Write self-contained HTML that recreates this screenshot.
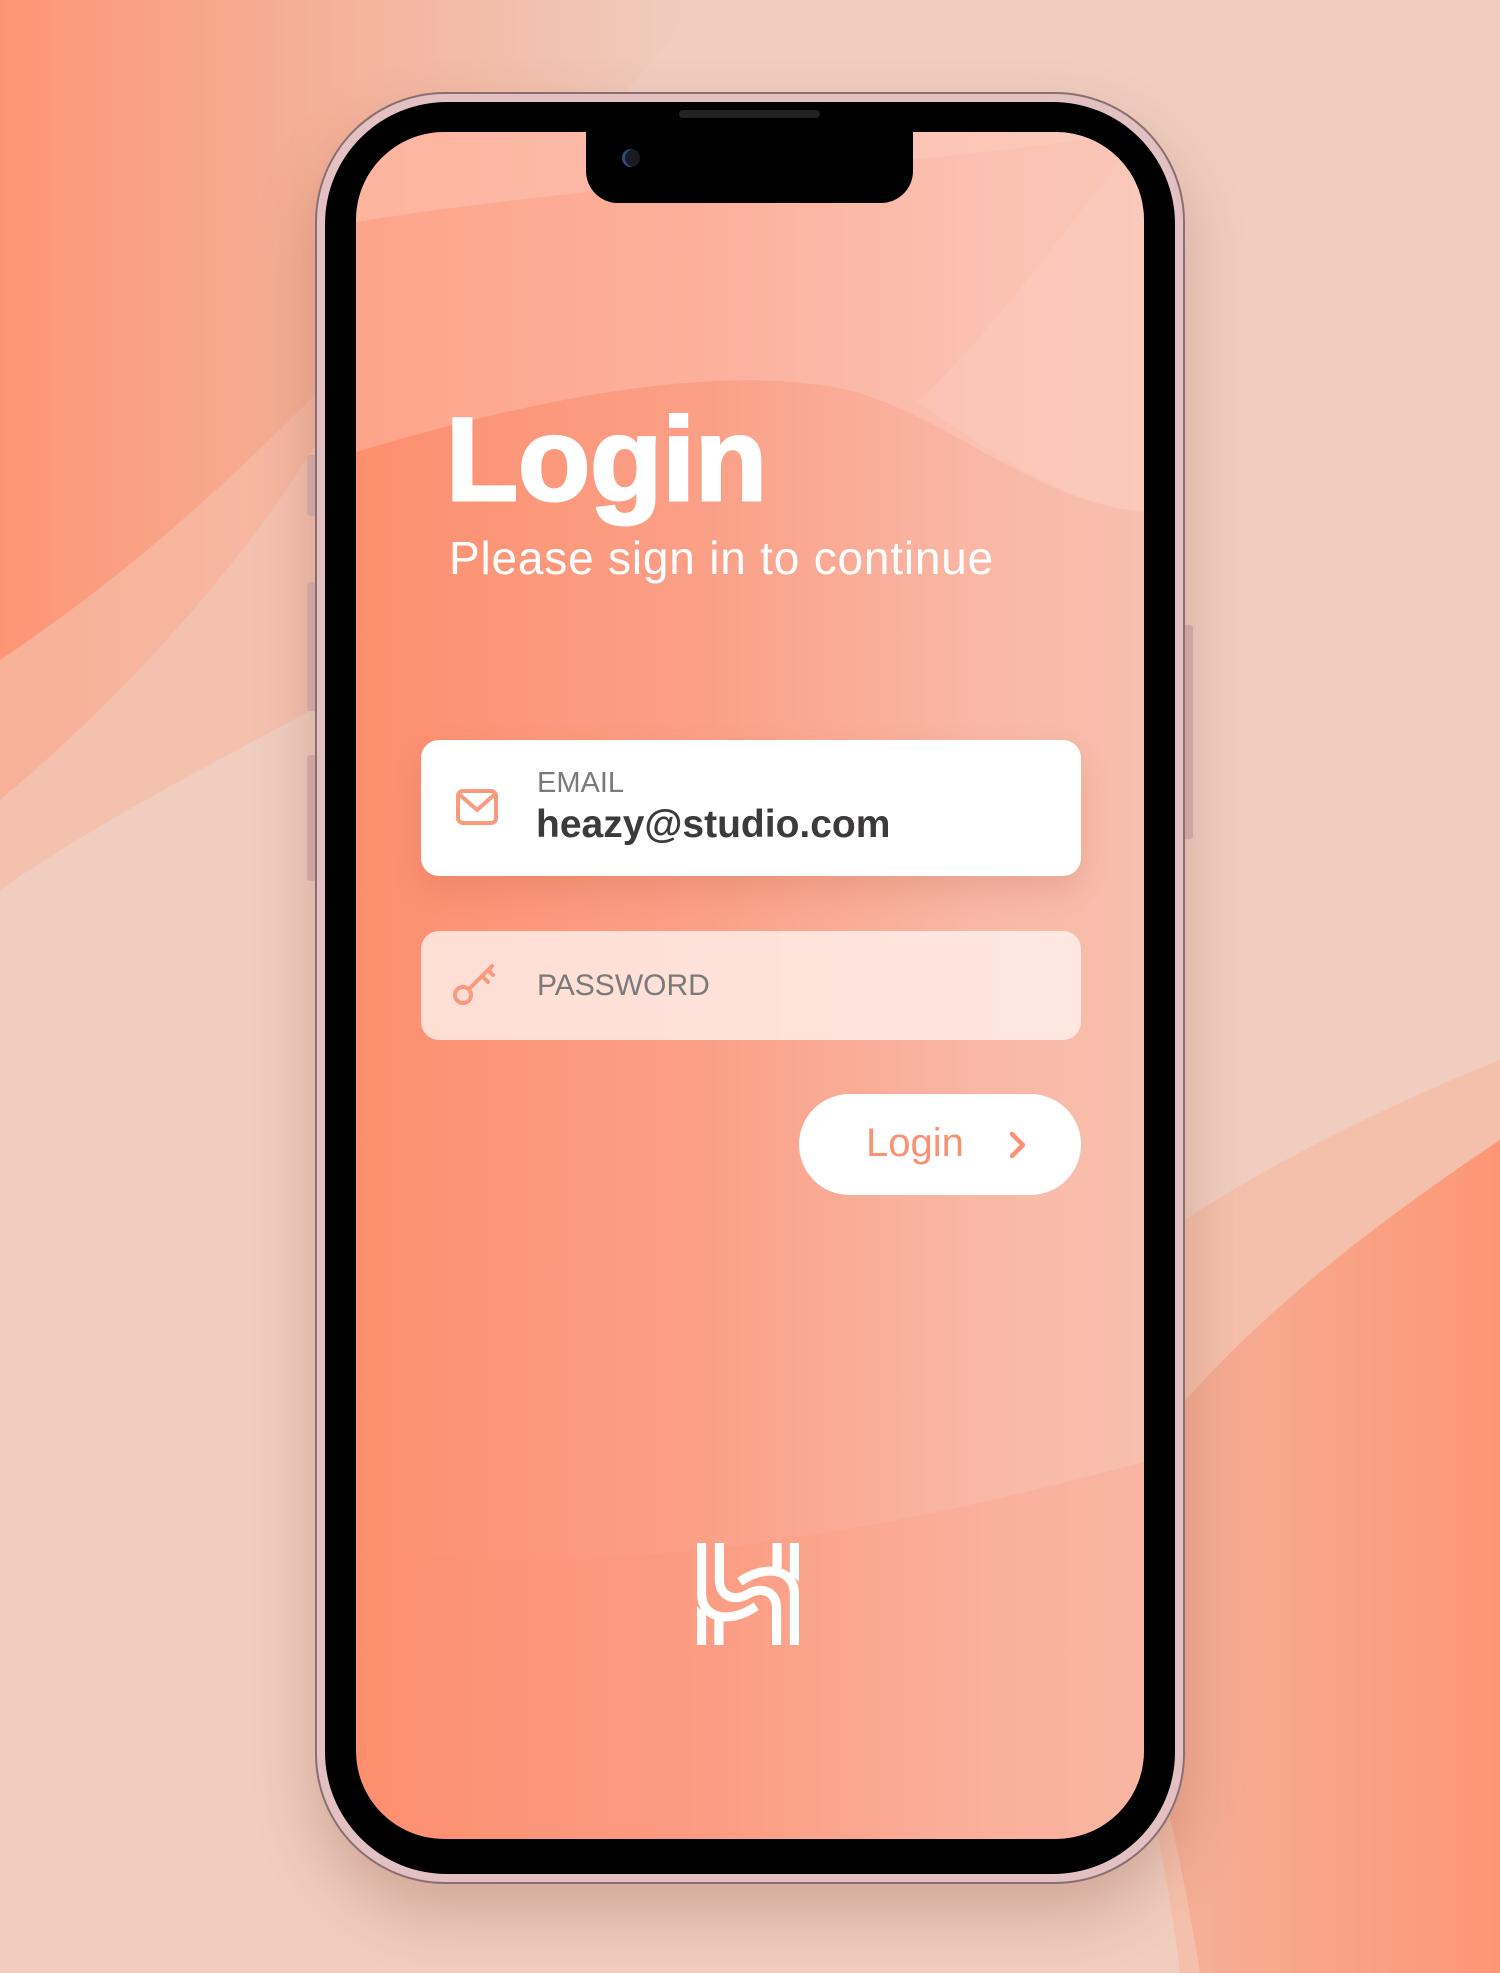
<!DOCTYPE html>
<html><head><meta charset="utf-8"><style>
html,body{margin:0;padding:0}
body{width:1500px;height:1973px;position:relative;overflow:hidden;background:#f0cdbf;font-family:"Liberation Sans",sans-serif}
.abs{position:absolute}
</style></head><body>
<svg class="abs" style="left:0;top:0" width="1500" height="1973" viewBox="0 0 1500 1973">
<defs>
<linearGradient id="bgl" x1="0" x2="1" y1="0" y2="0"><stop offset="0" stop-color="#fd9574"/><stop offset="0.5" stop-color="#f4b39c"/><stop offset="1" stop-color="#f0cdbf"/></linearGradient>
<linearGradient id="bgr" x1="0" x2="1"><stop offset="0" stop-color="#f3b7a2"/><stop offset="1" stop-color="#fd9675"/></linearGradient>
</defs>
<rect width="1500" height="1973" fill="#f0cdbf"/>
<path d="M0 0 H700 C550 200 400 300 330 420 C250 560 120 700 0 800 Z" fill="url(#bgl)"/>
<path d="M0 660 C150 560 260 450 330 380 L330 700 C220 760 100 820 0 890 Z" fill="#f6bca8" opacity="0.7"/>
<path d="M1500 1060 C1350 1120 1150 1220 1050 1330 C1100 1600 1160 1800 1180 1973 H1500 Z" fill="#f5c0ab"/>
<path d="M1500 1140 C1320 1260 1150 1400 1080 1560 C1150 1700 1180 1850 1200 1973 H1500 Z" fill="url(#bgr)"/>
</svg>

<!-- side buttons -->
<div class="abs" style="left:307px;top:455px;width:10px;height:61px;background:#d9b3b3;border-radius:3px"></div>
<div class="abs" style="left:307px;top:582px;width:10px;height:129px;background:#d9b3b3;border-radius:3px"></div>
<div class="abs" style="left:307px;top:755px;width:10px;height:126px;background:#d9b3b3;border-radius:3px"></div>
<div class="abs" style="left:1183px;top:625px;width:10px;height:214px;background:#d9b3b3;border-radius:3px"></div>

<!-- phone -->
<div class="abs" style="left:315px;top:92px;width:870px;height:1792px;border-radius:130px;background:#e3c1c2;box-shadow:0 30px 60px rgba(120,60,40,0.25),inset 0 0 0 2px #8a6e70"></div>
<div class="abs" style="left:325px;top:102px;width:850px;height:1772px;border-radius:122px;background:#000"></div>

<!-- screen -->
<div class="abs" style="left:356px;top:132px;width:788px;height:1707px;border-radius:88px;overflow:hidden;background:linear-gradient(90deg,#fd8f6e 0%,#fba088 45%,#f9b8a6 80%,#f8bfae 100%)">
  <svg class="abs" style="left:0;top:0" width="788" height="1707">
    <path d="M0 90 C250 50 500 40 788 0 L788 0 L0 0 Z" fill="#ffd0c4" opacity="0.35"/>
    <path d="M0 320 C200 260 380 230 500 260 C600 290 680 370 788 380 L788 0 L0 0 Z" fill="#ffd6cc" opacity="0.3"/>
    <path d="M788 0 L788 380 C700 370 640 320 560 270 C640 200 720 80 788 0 Z" fill="#fdd3ca" opacity="0.25"/>
    <path d="M0 1420 C250 1440 450 1420 788 1330 L788 1707 L0 1707 Z" fill="#fd9272" opacity="0.2"/>
  </svg>
</div>

<!-- notch -->
<div class="abs" style="left:586px;top:120px;width:327px;height:83px;background:#000;border-radius:0 0 32px 32px"></div>
<div class="abs" style="left:679px;top:110px;width:141px;height:8px;background:#222;border-radius:4px"></div>
<div class="abs" style="left:622px;top:149px;width:18px;height:18px;background:#1a1a22;border-radius:50%;box-shadow:inset 3px 0 0 #2c4d80"></div>

<!-- Title -->
<div class="abs" style="left:446px;top:390px;font-size:118px;font-weight:bold;color:#fff;line-height:140px;-webkit-text-stroke:3px #fff;letter-spacing:0px">Login</div>
<div class="abs" style="left:449px;top:528px;font-size:46px;color:#fff;line-height:60px;letter-spacing:0.8px">Please sign in to continue</div>

<!-- email card -->
<div class="abs" style="left:421px;top:740px;width:660px;height:136px;background:#fff;border-radius:18px;box-shadow:0 14px 30px rgba(170,80,50,0.18)"></div>
<svg class="abs" style="left:455px;top:788px" width="44" height="38" viewBox="0 0 44 38"><rect x="3" y="3" width="38" height="32" rx="5" fill="none" stroke="#f99a7d" stroke-width="4"/><path d="M5 7 L22 22 L39 7" fill="none" stroke="#f99a7d" stroke-width="4" stroke-linejoin="round"/></svg>
<div class="abs" style="left:537px;top:766px;font-size:29px;color:#7a7a7a;line-height:34px">EMAIL</div>
<div class="abs" style="left:536px;top:802px;font-size:39px;font-weight:bold;color:#3c3a3a;line-height:46px">heazy@studio.com</div>

<!-- password card -->
<div class="abs" style="left:421px;top:931px;width:660px;height:109px;background:rgba(255,244,240,0.78);border-radius:18px"></div>
<svg class="abs" style="left:450px;top:960px" width="50" height="48" viewBox="0 0 50 48"><circle cx="13" cy="35" r="8" fill="none" stroke="#f99a7d" stroke-width="4"/><path d="M19 29 L42 6 M32 16 L38 22 M38 10 L43 15" fill="none" stroke="#f99a7d" stroke-width="4" stroke-linecap="round"/></svg>
<div class="abs" style="left:537px;top:969px;font-size:30px;color:#7a7a7a;line-height:34px">PASSWORD</div>

<!-- login button -->
<div class="abs" style="left:799px;top:1094px;width:282px;height:101px;background:#fff;border-radius:51px"></div>
<div class="abs" style="left:866px;top:1118px;font-size:40px;color:#fa9074;line-height:50px">Login</div>
<svg class="abs" style="left:1004px;top:1130px" width="28" height="30" viewBox="0 0 28 30"><path d="M8 4 L19 15 L8 26" fill="none" stroke="#fa9074" stroke-width="4.5" stroke-linecap="round" stroke-linejoin="round"/></svg>

<!-- logo -->
<svg class="abs" style="left:697px;top:1543px" width="102" height="102" viewBox="0 0 100 100">
<g fill="none" stroke="#fff" stroke-width="9">
<path d="M4.5 0 V50 C4.5 74 32 80 58 62"/>
<path d="M22 0 V36 C22 52 36 58 50 50"/>
<path d="M95.5 100 V50 C95.5 26 68 20 42 38"/>
<path d="M78 100 V64 C78 48 64 42 50 50"/>
</g>
<path d="M0 62 L9 70 V100 H0 Z" fill="#fff"/>
<path d="M17 76 L26 72 V100 H17 Z" fill="#fff"/>
<path d="M100 38 L91 30 V0 H100 Z" fill="#fff"/>
<path d="M83 24 L74 28 V0 H83 Z" fill="#fff"/>
</svg>
</body></html>
